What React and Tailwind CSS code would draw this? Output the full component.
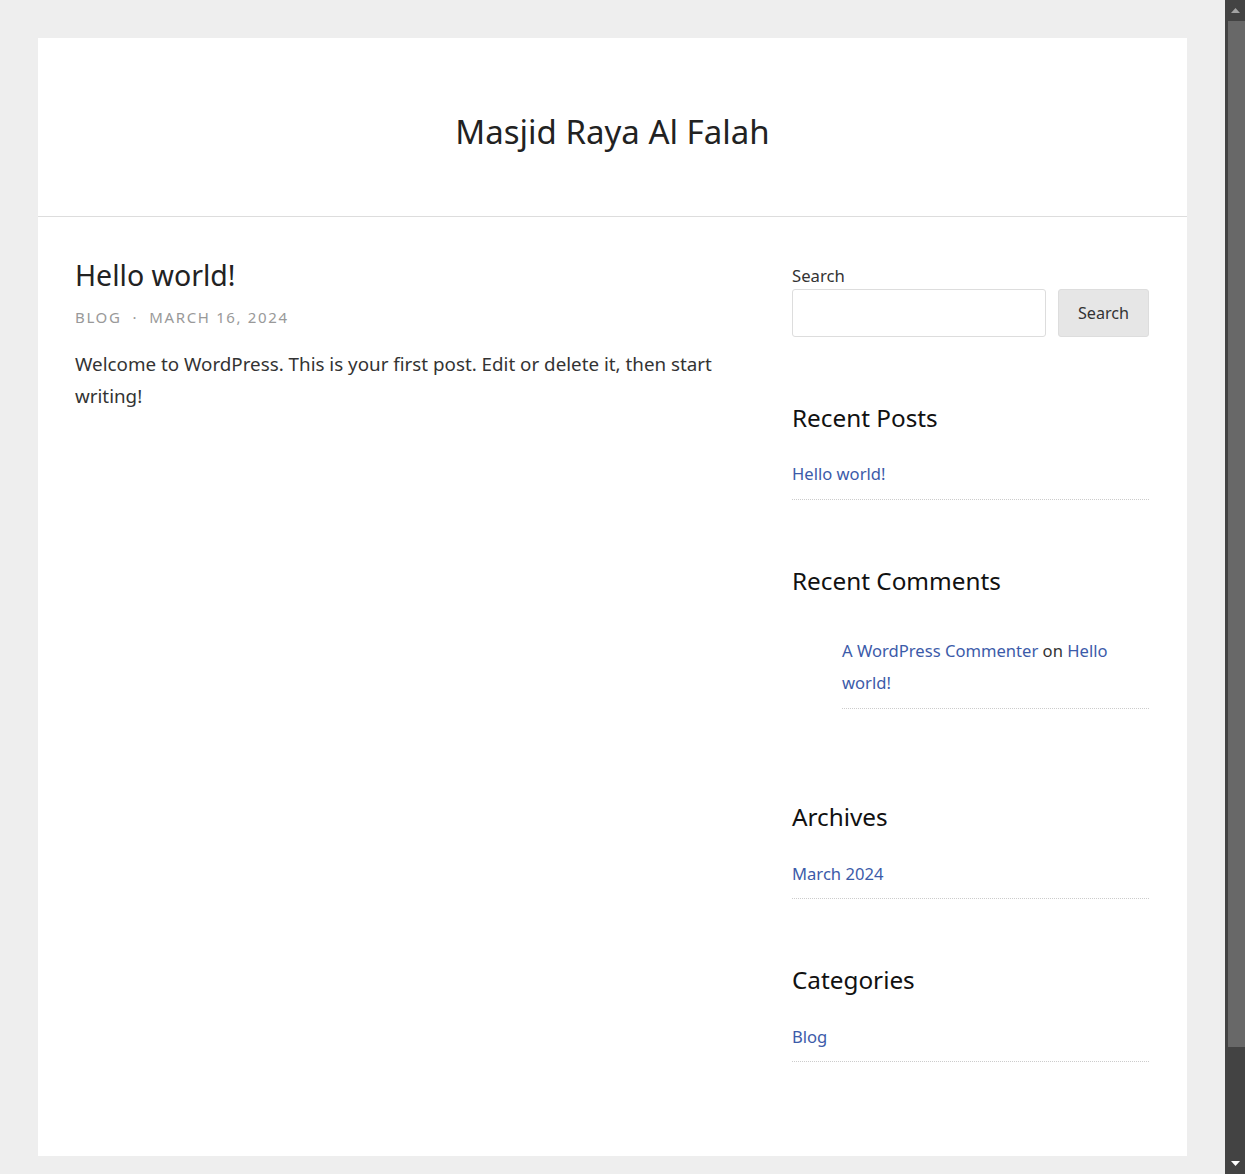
export default function App() {
  const font = { fontFamily: '"Noto Sans", "Open Sans", sans-serif' };
  const link = "text-[#3c5ba9]";
  return (
    <div className="flex h-[1174px] overflow-hidden bg-[#eeeeee]" style={font}>
      <div className="flex-1 px-[38px] pt-[38px]">
        <div className="bg-white h-[1118px]">
          <header className="h-[179px] border-b border-[#dddddd] flex justify-center pt-[71px]">
            <h1 className="text-[33px] leading-[46px] text-[#222222]">Masjid Raya Al Falah</h1>
          </header>
          <div className="flex pl-[37px] pr-[38px]">
            <main className="w-[650px] pt-[38px]">
              <h2 className="text-[28.5px] leading-[40px] text-[#222222]">Hello world!</h2>
              <div className="mt-[12px] text-[15px] leading-[20px] tracking-[0.11em] text-[#999999] uppercase">
                <span>Blog</span>
                <span className="mx-[11px]">·</span>
                <span>March 16, 2024</span>
              </div>
              <p className="mt-[21px] text-[18.8px] leading-[32px] text-[#333333]">
                Welcome to WordPress. This is your first post. Edit or delete it, then start writing!
              </p>
            </main>
            <aside className="ml-auto w-[357px] pt-[47px]">
              <label className="block text-[16.7px] leading-[24px] text-[#333333]">Search</label>
              <div className="mt-[1px] flex gap-[12px]">
                <input className="h-[48px] w-[254px] rounded-[3px] border border-[#dddddd] bg-white" />
                <button className="h-[48px] flex-1 rounded-[3px] border border-[#dddddd] bg-[#e6e6e6] text-[16.2px] text-[#333333]">
                  Search
                </button>
              </div>

              <h3 className="mt-[65px] text-[24.3px] leading-[32px] text-[#111111]">Recent Posts</h3>
              <ul className="mt-[24px]">
                <li className={`border-b border-dotted border-[#cccccc] pb-[9px] text-[16.6px] leading-[32px] ${link}`}>Hello world!</li>
              </ul>

              <h3 className="mt-[65px] text-[24.3px] leading-[32px] text-[#111111]">Recent Comments</h3>
              <ul className="mt-[38px] pl-[50px]">
                <li className="border-b border-dotted border-[#cccccc] pb-[9px] text-[16.6px] leading-[32px] text-[#333333]">
                  <span className={link}>A WordPress Commenter</span> on <span className={link}>Hello world!</span>
                </li>
              </ul>

              <h3 className="mt-[92px] text-[24.3px] leading-[32px] text-[#111111]">Archives</h3>
              <ul className="mt-[25px]">
                <li className={`border-b border-dotted border-[#cccccc] pb-[8px] text-[16.6px] leading-[32px] ${link}`}>March 2024</li>
              </ul>

              <h3 className="mt-[65px] text-[24.3px] leading-[32px] text-[#111111]">Categories</h3>
              <ul className="mt-[25px]">
                <li className={`border-b border-dotted border-[#cccccc] pb-[8px] text-[16.6px] leading-[32px] ${link}`}>Blog</li>
              </ul>
            </aside>
          </div>
        </div>
      </div>
      <div className="w-[20px] bg-[#434343] flex flex-col items-center">
        <svg width="9" height="5" viewBox="0 0 9 5" className="mt-[8px]">
          <polygon points="0,5 9,5 4.5,0" fill="#a3a3a3" />
        </svg>
        <div className="mt-[8px] h-[1026px] w-[17px] ml-[2px] bg-[#686868]" />
        <div className="flex-1" />
        <svg width="9" height="5" viewBox="0 0 9 5" className="mb-[8px]">
          <polygon points="0,0 9,0 4.5,5" fill="#ffffff" />
        </svg>
      </div>
    </div>
  );
}
